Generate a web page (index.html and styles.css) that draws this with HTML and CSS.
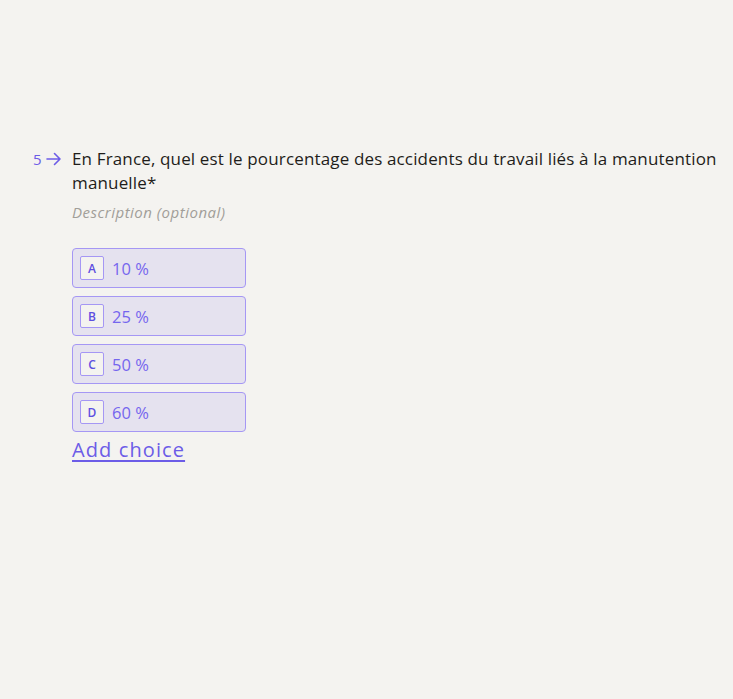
FILE: index.html
```html
<!DOCTYPE html>
<html lang="fr">
<head>
<meta charset="utf-8">
<link rel="stylesheet" href="styles.css">
</head>
<body>
<main class="page">
  <section class="question">
    <div class="qnum">
      <span class="num">5</span>
      <svg class="arrow" width="16" height="14" viewBox="0 0 16 14"><path d="M1 7h13M8.5 1.5L14 7l-5.5 5.5" fill="none" stroke="#6c5ce7" stroke-width="1.6" stroke-linecap="round" stroke-linejoin="round"/></svg>
    </div>
    <div class="qbody">
      <h2 class="title">En France, quel est le pourcentage des accidents du travail liés à la manutention manuelle*</h2>
      <p class="desc">Description (optional)</p>
      <ul class="choices">
        <li class="choice"><span class="key">A</span><span class="label">10 %</span></li>
        <li class="choice"><span class="key">B</span><span class="label">25 %</span></li>
        <li class="choice"><span class="key">C</span><span class="label">50 %</span></li>
        <li class="choice"><span class="key">D</span><span class="label">60 %</span></li>
      </ul>
      <a class="add" href="#">Add choice</a>
    </div>
  </section>
</main>
</body>
</html>
```

FILE: styles.css
```css
html, body {
  margin: 0;
  padding: 0;
  background: #f4f3f0;
}
body {
  font-family: "Open Sans", "Noto Sans", sans-serif;
  width: 733px;
  height: 699px;
  overflow: hidden;
}
.page {
  padding: 147px 12px 0 33px;
}
.question {
  display: flex;
  align-items: flex-start;
}
.qnum {
  width: 39px;
  display: flex;
  align-items: center;
  gap: 4px;
  height: 24px;
  color: #6c5ce7;
  font-size: 15px;
}
.arrow { display: block; }
.qbody { flex: 1; }
.title {
  margin: 0;
  font-size: 17px;
  font-weight: 400;
  letter-spacing: 0.15px;
  line-height: 24px;
  color: #1f1d1a;
}
.desc {
  margin: 7px 0 0;
  font-size: 15px;
  letter-spacing: 0.5px;
  font-style: italic;
  color: #a19e99;
  line-height: 20px;
}
.choices {
  list-style: none;
  margin: 26px 0 0;
  padding: 0;
  display: flex;
  flex-direction: column;
  gap: 8px;
}
.choice {
  box-sizing: border-box;
  width: 174px;
  height: 40px;
  border: 1px solid #a597f4;
  border-radius: 4px;
  background: #e5e2ef;
  display: flex;
  align-items: center;
  padding-left: 7px;
  gap: 8px;
}
.key {
  box-sizing: border-box;
  width: 24px;
  height: 24px;
  border: 1px solid #a597f4;
  border-radius: 2px;
  background: #f4f3f0;
  display: flex;
  align-items: center;
  justify-content: center;
  font-size: 12px;
  font-weight: 600;
  color: #5e4fe0;
}
.label {
  font-size: 16.5px;
  color: #7566ee;
}
.add {
  display: inline-block;
  margin-top: 4px;
  font-size: 20px;
  letter-spacing: 1.1px;
  line-height: 28px;
  color: #6c5ce7;
  text-decoration: underline;
  text-underline-offset: 3px;
}
```
